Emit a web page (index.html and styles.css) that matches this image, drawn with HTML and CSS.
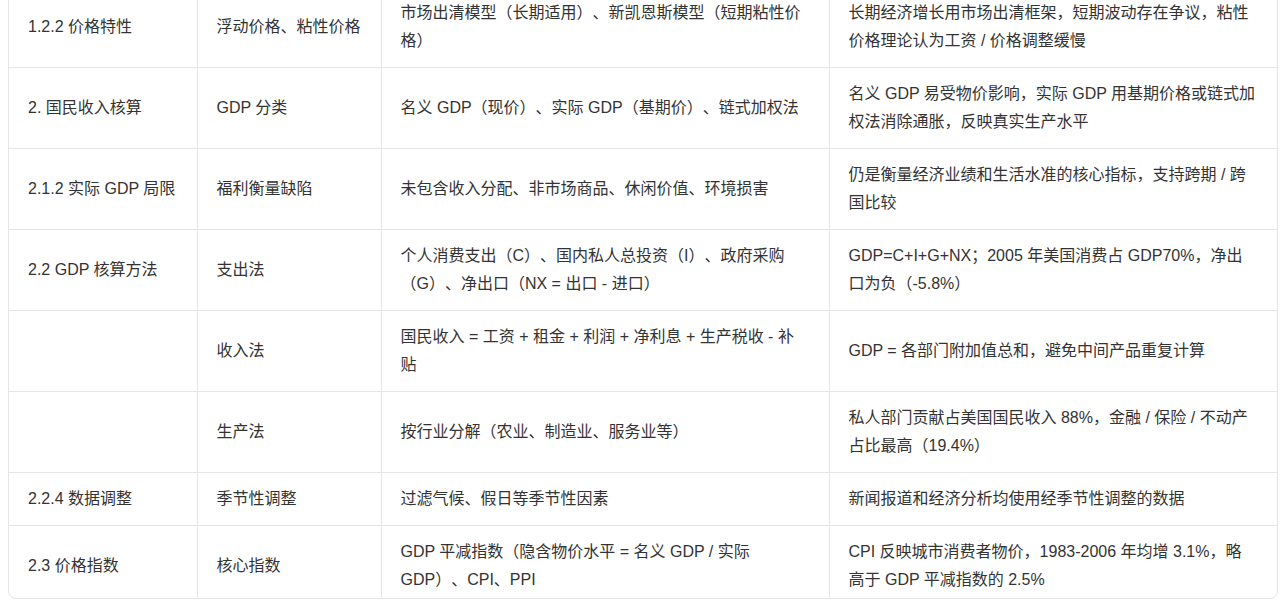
FILE: index.html
```html
<!DOCTYPE html>
<html lang="zh-CN">
<head>
<meta charset="utf-8">
<title>宏观经济学笔记</title>
<link rel="stylesheet" href="styles.css">
</head>
<body>
<div class="table-wrap">
<table class="notes">
<colgroup>
<col class="c1"><col class="c2"><col class="c3"><col class="c4">
</colgroup>
<tbody>
<tr><td>1.2.2 价格特性</td><td>浮动价格、粘性价格</td><td>市场出清模型（长期适用）、新凯恩斯模型（短期粘性价格）</td><td>长期经济增长用市场出清框架，短期波动存在争议，粘性价格理论认为工资 / 价格调整缓慢</td></tr>
<tr><td>2. 国民收入核算</td><td>GDP 分类</td><td>名义 GDP（现价）、实际 GDP（基期价）、链式加权法</td><td>名义 GDP 易受物价影响，实际 GDP 用基期价格或链式加权法消除通胀，反映真实生产水平</td></tr>
<tr><td>2.1.2 实际 GDP 局限</td><td>福利衡量缺陷</td><td>未包含收入分配、非市场商品、休闲价值、环境损害</td><td>仍是衡量经济业绩和生活水准的核心指标，支持跨期 / 跨国比较</td></tr>
<tr><td>2.2 GDP 核算方法</td><td>支出法</td><td>个人消费支出（C）、国内私人总投资（I）、政府采购（G）、净出口（NX = 出口 - 进口）</td><td>GDP=C+I+G+NX；2005 年美国消费占 GDP70%，净出口为负（-5.8%）</td></tr>
<tr><td></td><td>收入法</td><td>国民收入 = 工资 + 租金 + 利润 + 净利息 + 生产税收 - 补贴</td><td>GDP = 各部门附加值总和，避免中间产品重复计算</td></tr>
<tr><td></td><td>生产法</td><td>按行业分解（农业、制造业、服务业等）</td><td>私人部门贡献占美国国民收入 88%，金融 / 保险 / 不动产占比最高（19.4%）</td></tr>
<tr><td>2.2.4 数据调整</td><td>季节性调整</td><td>过滤气候、假日等季节性因素</td><td>新闻报道和经济分析均使用经季节性调整的数据</td></tr>
<tr><td>2.3 价格指数</td><td>核心指数</td><td>GDP 平减指数（隐含物价水平 = 名义 GDP / 实际 GDP）、CPI、PPI</td><td>CPI 反映城市消费者物价，1983-2006 年均增 3.1%，略高于 GDP 平减指数的 2.5%</td></tr>
</tbody>
</table>
</div>
</body>
</html>
```

FILE: styles.css
```css
html, body {
  margin: 0;
  padding: 0;
  background: #ffffff;
}

body {
  font-family: "Liberation Sans", "Noto Sans CJK SC", sans-serif;
  color: #333333;
  font-size: 16px;
  overflow: hidden;
  text-spacing-trim: space-all;
}

.table-wrap {
  margin: -14px 0 0 8px;
  width: 1270px;
  height: 613px;
  box-sizing: border-box;
  border: 1px solid #e6e6e6;
  border-radius: 8px;
  overflow: hidden;
}

.notes {
  width: 1268px;
  border-collapse: collapse;
  table-layout: fixed;
}

.c1 { width: 188px; }
.c2 { width: 184px; }
.c3 { width: 448px; }
.c4 { width: 448px; }

.notes td {
  padding: 12px 20px 12px 19px;
  line-height: 28px;
  vertical-align: middle;
  border-right: 1px solid #e6e6e6;
  border-bottom: 1px solid #e6e6e6;
  text-align: left;
}

.notes td:last-child {
  border-right: none;
}
```
